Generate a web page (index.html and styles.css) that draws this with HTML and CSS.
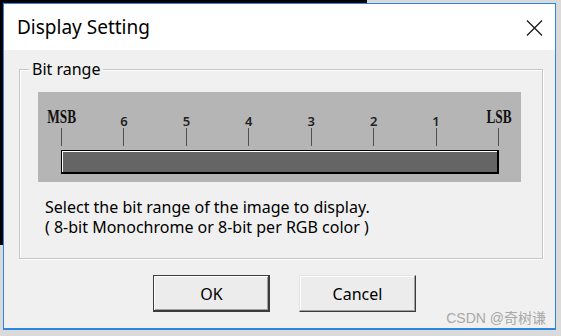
FILE: index.html
```html
<!DOCTYPE html>
<html>
<head>
<meta charset="utf-8">
<title>Display Setting</title>
<link rel="stylesheet" href="styles.css">
</head>
<body>
<div class="window">
  <div class="titlebar">
    <span class="title">Display Setting</span>
    <svg class="close" width="17" height="16" viewBox="0 0 17 16"><path d="M1 0.5 L16 15.5 M16 0.5 L1 15.5" stroke="#1a1a1a" stroke-width="1.3" fill="none"/></svg>
  </div>
  <div class="content">
    <div class="group">
      <span class="legend">Bit range</span>
      <div class="panel">
        <div class="scale">
          <div class="tick end"><span class="lbl-end">MSB</span><i></i></div>
          <div class="tick"><span class="lbl">6</span><i></i></div>
          <div class="tick"><span class="lbl">5</span><i></i></div>
          <div class="tick"><span class="lbl">4</span><i></i></div>
          <div class="tick"><span class="lbl">3</span><i></i></div>
          <div class="tick"><span class="lbl">2</span><i></i></div>
          <div class="tick"><span class="lbl">1</span><i></i></div>
          <div class="tick end"><span class="lbl-end">LSB</span><i></i></div>
        </div>
        <div class="bar"></div>
      </div>
      <p class="desc">Select the bit range of the image to display.<br>( 8-bit Monochrome or 8-bit per RGB color )</p>
    </div>
    <div class="buttons">
      <button class="btn default">OK</button>
      <button class="btn">Cancel</button>
    </div>
    <span class="watermark">CSDN @奇树谦</span>
  </div>
</div>
</body>
</html>
```
FILE: styles.css
```css
html, body {
  margin: 0;
  padding: 0;
}
body {
  width: 561px;
  height: 336px;
  overflow: hidden;
  background:
    linear-gradient(#000, #000) 0 0 / 367px 3px no-repeat,
    linear-gradient(#000, #000) 0 0 / 3px 245px no-repeat,
    #dadada;
  font-family: "Noto Sans", "Noto Sans CJK SC", sans-serif;
  color: #000;
}
.window {
  margin: 3px 0 0 3px;
  width: 551px;
  border: 1px solid #2a86e0;
  border-bottom-width: 2px;
  display: flex;
  flex-direction: column;
}
.titlebar {
  height: 46px;
  background: #fff;
  display: flex;
  align-items: center;
  justify-content: space-between;
  padding: 0 12px 0 13px;
}
.title {
  font-size: 19px;
  line-height: 26px;
  color: #000;
}
.close {
  display: block;
  margin-top: 1px;
}
.content {
  position: relative;
  height: 278px;
  background: #f0f0f0;
  padding-top: 19px;
  box-sizing: border-box;
}
.group {
  position: relative;
  margin-left: 15px;
  width: 522px;
  border: 1px solid #c6c6c6;
  box-shadow: inset 1px 1px 0 #fff, 1px 1px 0 #fff;
  padding: 22px 0 21px 0;
}
.legend {
  position: absolute;
  top: -11px;
  left: 9px;
  padding: 0 3px;
  background: #f0f0f0;
  font-size: 16px;
  line-height: 20px;
}
.panel {
  margin-left: 18px;
  width: 483px;
  height: 90px;
  box-sizing: border-box;
  background: #b5b5b5;
  padding: 18px 0 0 23px;
}
.scale {
  width: 438px;
  display: flex;
  justify-content: space-between;
  align-items: flex-end;
}
.tick {
  width: 1px;
  display: flex;
  flex-direction: column;
  align-items: center;
}
.tick i {
  display: block;
  width: 1px;
  height: 18px;
  background: #4f4f4f;
}
.lbl {
  font-size: 13px;
  line-height: 10px;
  height: 10px;
  margin-bottom: 2px;
  color: #222;
  font-weight: 600;
}
.lbl-end {
  font-family: "Liberation Serif", serif;
  font-weight: bold;
  font-size: 19px;
  line-height: 13px;
  height: 13px;
  margin-bottom: 5px;
  transform: scaleX(0.7);
  color: #111;
}
.bar {
  margin-top: 4px;
  width: 435px;
  height: 21px;
  border: solid #000;
  border-width: 1px 2px 2px 1px;
  background: #656565;
  box-shadow: inset 1px 1px 0 #fff;
}
.desc {
  margin: 15px 0 0 25px;
  font-size: 16px;
  line-height: 20px;
  color: #000;
}
.buttons {
  display: flex;
  gap: 29px;
  margin: 16px 0 0 149px;
}
.btn {
  box-sizing: border-box;
  width: 117px;
  height: 37px;
  padding: 0;
  font-family: "Noto Sans", sans-serif;
  font-size: 16px;
  color: #000;
  background: #ececec;
  border: 1px solid;
  border-color: #e3e3e3 #3c3c3c #3c3c3c #e3e3e3;
  box-shadow: inset -1px -1px 0 #a0a0a0, inset 1px 1px 0 #fff;
}
.btn.default {
  border-color: #3c3c3c;
  box-shadow: inset -1px -1px 0 #3c3c3c, inset 1px 1px 0 #fff, inset -2px -2px 0 #a0a0a0;
}
.watermark {
  position: absolute;
  right: 9px;
  bottom: 2px;
  font-family: "Liberation Sans", "Noto Sans CJK SC", sans-serif;
  font-size: 14px;
  line-height: 15px;
  color: #a8a8a8;
}
```
